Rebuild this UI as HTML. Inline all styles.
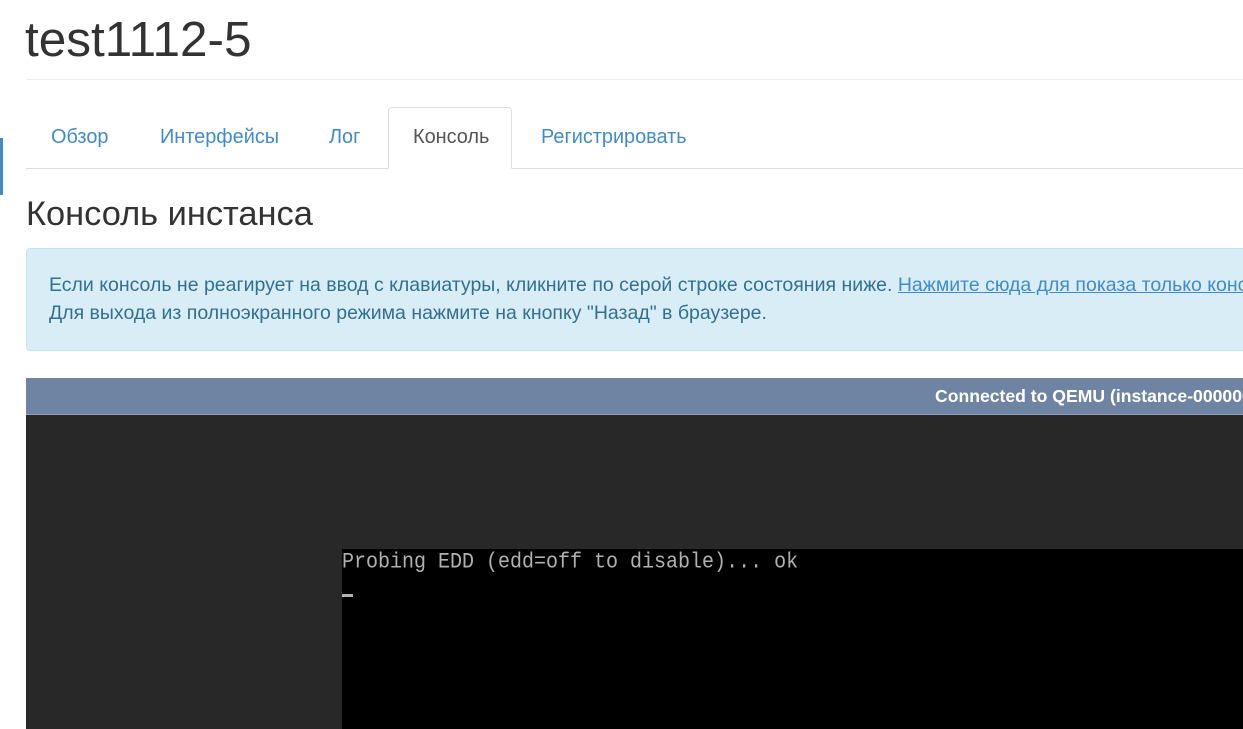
<!DOCTYPE html>
<html><head><meta charset="utf-8"><style>
html,body{margin:0;padding:0;background:#fff;width:1243px;height:729px;overflow:hidden;font-family:"Liberation Sans",Arial,sans-serif}
.abs{position:absolute;white-space:nowrap}
</style></head><body>
<div class="abs" style="left:0;top:138px;width:3px;height:57px;background:#428bca"></div>
<div class="abs" style="left:25px;top:10px;font-size:49.5px;color:#333;line-height:60px">test1112-5</div>
<div class="abs" style="left:26px;top:79px;width:1217px;height:1px;background:#eee"></div>
<div class="abs" style="left:26px;top:168px;width:1217px;height:1px;background:#ddd"></div>
<div class="abs" style="left:388px;top:107px;width:124px;height:62px;background:#fff;border:1px solid #ddd;border-bottom-color:#fff;border-radius:4px 4px 0 0;box-sizing:border-box"></div>
<div class="abs" style="top:125px;font-size:19.9px;line-height:24px;color:#428bca;left:51px">Обзор</div>
<div class="abs" style="top:125px;font-size:19.9px;line-height:24px;color:#428bca;left:160px">Интерфейсы</div>
<div class="abs" style="top:125px;font-size:19.9px;line-height:24px;color:#428bca;left:329px">Лог</div>
<div class="abs" style="top:125px;font-size:19.9px;line-height:24px;color:#555;left:413px">Консоль</div>
<div class="abs" style="top:125px;font-size:19.9px;line-height:24px;color:#428bca;left:541px">Регистрировать</div>
<div class="abs" style="left:26px;top:194px;font-size:34.4px;line-height:40px;color:#333">Консоль инстанса</div>
<div class="abs" style="left:26px;top:248px;width:1230px;height:103px;background:#d9edf7;border:1px solid #bce8f1;border-radius:4px;box-sizing:border-box"></div>
<div class="abs" style="left:49px;top:271px;font-size:19.5px;line-height:28px;color:#31708f">Если консоль не реагирует на ввод с клавиатуры, кликните по серой строке состояния ниже. <span style="text-decoration:underline;color:#428bca">Нажмите сюда для показа только консоли</span><br>Для выхода из полноэкранного режима нажмите на кнопку "Назад" в браузере.</div>
<div class="abs" style="left:26px;top:378px;width:1217px;height:37px;background:#6e84a2;border-bottom:1px solid #8fa0b8;box-sizing:border-box"></div>
<div class="abs" style="left:935px;top:386px;font-size:17.6px;font-weight:bold;color:#fff;line-height:20px">Connected to QEMU (instance-000000</div>
<div class="abs" style="left:26px;top:415px;width:1217px;height:314px;background:#282828"></div>
<div class="abs" style="left:342px;top:549px;width:901px;height:180px;background:#000"></div>
<div class="abs" style="left:342px;top:550px;font-family:'Liberation Mono',monospace;font-size:20px;line-height:24px;color:#b0b0b0;transform:scaleY(1.1);transform-origin:0 0">Probing EDD (edd=off to disable)... ok</div>
<div class="abs" style="left:342px;top:594px;width:11px;height:3px;background:#b0b0b0"></div>
</body></html>
